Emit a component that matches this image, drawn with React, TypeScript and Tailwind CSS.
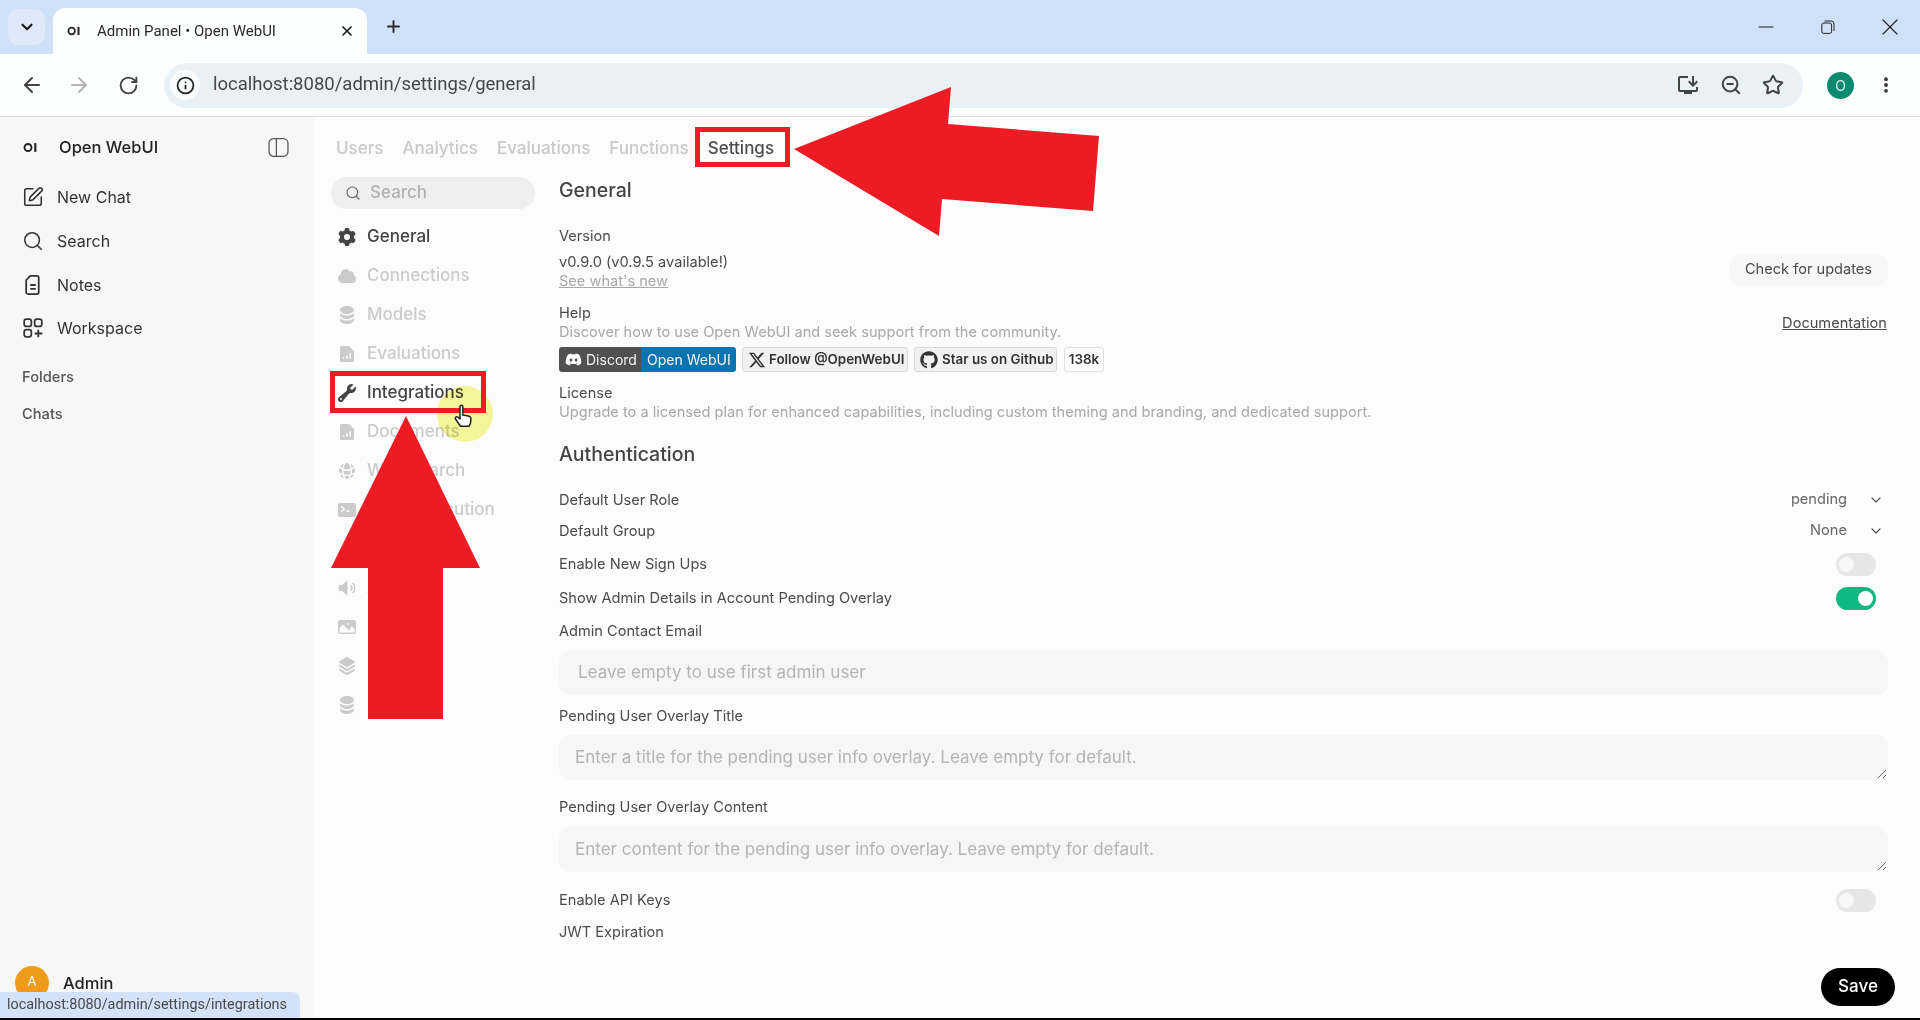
import { ArrowLeft, ArrowRight, ChevronDown, Info, Minus, Plus, RotateCw, Search, Star, SquarePen, X, MoreVertical, ZoomOut } from "lucide-react";
import { FaDiscord, FaGithub } from "react-icons/fa";
import { FaXTwitter } from "react-icons/fa6";
import { MdOutlineInstallDesktop } from "react-icons/md";
import {
  HiMiniCog6Tooth,
  HiMiniCloud,
  HiMiniCircleStack,
  HiMiniDocumentChartBar,
  HiMiniWrench,
  HiMiniGlobeAlt,
  HiMiniCommandLine,
  HiMiniChartBar,
  HiMiniSpeakerWave,
  HiMiniPhoto,
  HiMiniSquare3Stack3D,
} from "react-icons/hi2";

const navItems = [
  { label: "General", icon: HiMiniCog6Tooth, active: true },
  { label: "Connections", icon: HiMiniCloud },
  { label: "Models", icon: HiMiniCircleStack },
  { label: "Evaluations", icon: HiMiniDocumentChartBar },
  { label: "Integrations", icon: HiMiniWrench, active: true },
  { label: "Documents", icon: HiMiniDocumentChartBar },
  { label: "Web Search", icon: HiMiniGlobeAlt },
  { label: "Code Execution", icon: HiMiniCommandLine },
  { label: "Interface", icon: HiMiniChartBar },
  { label: "Audio", icon: HiMiniSpeakerWave },
  { label: "Images", icon: HiMiniPhoto },
  { label: "Pipelines", icon: HiMiniSquare3Stack3D },
  { label: "Database", icon: HiMiniCircleStack },
];

function OiLogo({ className }: { className: string }) {
  return (
    <svg viewBox="0 0 24 16" className={className} fill="none">
      <circle cx="8" cy="8" r="5.6" stroke="#222" strokeWidth="3" />
      <rect x="18" y="1" width="3.4" height="14" fill="#222" />
    </svg>
  );
}

function WorkspaceIcon() {
  return (
    <svg viewBox="0 0 20 20" className="w-[22px] h-[22px]" fill="none" stroke="#333" strokeWidth="1.6">
      <rect x="2" y="2" width="6.5" height="6.5" rx="2" />
      <rect x="11.5" y="2" width="6.5" height="6.5" rx="2" />
      <rect x="2" y="11.5" width="6.5" height="6.5" rx="2" />
      <path d="M14.8 11.500v7M11.500 15h7" />
    </svg>
  );
}

function NotesIcon() {
  return (
    <svg viewBox="0 0 20 20" className="w-[22px] h-[22px]" fill="none" stroke="#333" strokeWidth="1.6" strokeLinejoin="round">
      <path d="M7.500 1.800h6a1.700 1.700 0 0 1 1.700 1.700v13a1.700 1.700 0 0 1-1.700 1.700h-8a1.700 1.700 0 0 1-1.700-1.700V5.500z" />
      <path d="M7.500 10h5M7.500 13.500h5" />
    </svg>
  );
}

function RestoreIcon() {
  return (
    <svg viewBox="0 0 14 14" className="w-[14px] h-[14px]" fill="none" stroke="#222" strokeWidth="1">
      <rect x="0.800" y="3" width="9.800" height="10.400" rx="2" />
      <path d="M3.500 1h6.500a3 3 0 0 1 3 3v7" />
    </svg>
  );
}

function Toggle({ on }: { on?: boolean }) {
  return (
    <div className={`w-[40px] h-[23px] rounded-full flex items-center px-[3px] ${on ? "bg-[#10b981] justify-end" : "bg-[#e6e6e6] justify-start"}`}>
      <div className={`w-[15px] h-[15px] rounded-full ${on ? "bg-white" : "bg-[#f8f8f8]"}`} />
    </div>
  );
}

function Row({ label, mt, children }: { label: string; mt: string; children?: React.ReactNode }) {
  return (
    <div className={`flex items-center justify-between h-[20px] ${mt}`}>
      <span className="text-[14.6px] leading-[20px] text-[#4b4b4b]">{label}</span>
      {children}
    </div>
  );
}

function Resizer() {
  return (
    <svg viewBox="0 0 10 10" className="absolute right-[1px] bottom-[1px] w-[10px] h-[10px]" stroke="#666" strokeWidth="1">
      <path d="M1 9l8-8M6 9l3-3" />
    </svg>
  );
}

export default function App() {
  return (
    <div className="relative h-[1020px] w-[1920px] overflow-hidden flex flex-col bg-[#fcfcfc] font-['Inter',sans-serif]">
      {/* browser tab strip */}
      <div className="h-[54px] shrink-0 bg-[#d0e0f8] flex items-end">
        <div className="ml-[8px] mb-[9px] w-[37px] h-[36px] rounded-[10px] bg-[#dfe9f9] flex items-center justify-center">
          <ChevronDown className="w-[18px] h-[18px] text-[#1f1f1f]" strokeWidth={3} />
        </div>
        <div className="relative ml-[8px] w-[314px] h-[46px] bg-[#fdfefe] rounded-t-[12px] flex items-center pl-[14px] pr-[12px]">
          <OiLogo className="w-[14px] h-[10px]" />
          <span className="ml-[16px] text-[15px] text-[#2a2a2a] font-['Roboto',sans-serif] whitespace-nowrap">Admin Panel • Open WebUI</span>
          <X className="ml-auto w-[16px] h-[16px] text-[#1f1f1f]" strokeWidth={2.6} />
        </div>
        <Plus className="ml-[17px] mb-[18px] w-[19px] h-[19px] text-[#2a2a2a]" strokeWidth={2.4} />
        <div className="ml-auto flex items-center mb-[13px] pr-[16px] gap-[34px]">
          <div className="w-[28px] h-[28px] flex items-center justify-center"><Minus className="w-[24px] h-[24px] text-[#222]" strokeWidth={1.1} /></div>
          <div className="w-[28px] h-[28px] flex items-center justify-center"><RestoreIcon /></div>
          <div className="w-[28px] h-[28px] flex items-center justify-center"><X className="w-[28px] h-[28px] text-[#222]" strokeWidth={1} /></div>
        </div>
      </div>

      {/* browser toolbar */}
      <div className="h-[63px] shrink-0 bg-[#fdfefe] border-b border-[#dfdfdf] flex items-center pl-[20px] pr-[20px]">
        <ArrowLeft className="w-[24px] h-[24px] text-[#444]" strokeWidth={2} />
        <ArrowRight className="ml-[23px] w-[24px] h-[24px] text-[#b4b4b4]" strokeWidth={2} />
        <RotateCw className="ml-[27px] w-[21px] h-[21px] text-[#444]" strokeWidth={2.2} />
        <div className="ml-[25px] w-[1639px] h-[45px] rounded-full bg-[#eaf1f5] flex items-center pl-[6px] pr-[19px]">
          <div className="w-[30px] h-[30px] rounded-full bg-[#fbfdfd] flex items-center justify-center">
            <Info className="w-[19px] h-[19px] text-[#222]" strokeWidth={2.2} />
          </div>
          <span className="ml-[13px] text-[18.5px] text-[#474747] font-['Roboto',sans-serif]">localhost:8080/admin/settings/general</span>
          <div className="ml-auto flex items-center gap-[20px]">
            <MdOutlineInstallDesktop className="w-[24px] h-[24px] text-[#444]" />
            <ZoomOut className="w-[22px] h-[22px] text-[#444]" strokeWidth={2.2} />
            <Star className="w-[22px] h-[22px] text-[#444]" strokeWidth={2.2} />
          </div>
        </div>
        <div className="ml-[24px] w-[27px] h-[27px] rounded-full bg-[#0b8a6f] text-[#cfeee6] text-[14px] flex items-center justify-center">O</div>
        <MoreVertical className="ml-[22px] w-[20px] h-[20px] text-[#333]" strokeWidth={2.6} />
      </div>

      <div className="flex-1 min-h-0 flex">
        {/* app sidebar */}
        <aside className="w-[314px] shrink-0 bg-[#f7f7f7] flex flex-col pl-[22px]">
          <div className="mt-[15px] h-[30px] flex items-center pr-[25px]">
            <OiLogo className="ml-[1px] w-[15px] h-[11px]" />
            <span className="ml-[21px] text-[16.5px] font-medium text-[#222]">Open WebUI</span>
            <svg viewBox="0 0 20 20" className="ml-auto w-[21px] h-[21px]" fill="none" stroke="#555" strokeWidth="1.2">
              <rect x="1" y="1.500" width="18" height="17" rx="4.500" />
              <path d="M8 1.500v17" />
            </svg>
          </div>
          <div className="mt-[13px] flex flex-col text-[16px] text-[#333]">
            <div className="h-[44px] flex items-center gap-[13px]"><SquarePen className="w-[22px] h-[22px]" strokeWidth={1.7} />New Chat</div>
            <div className="h-[44px] flex items-center gap-[13px]"><Search className="w-[22px] h-[22px]" strokeWidth={1.7} />Search</div>
            <div className="h-[43px] flex items-center gap-[13px]"><NotesIcon />Notes</div>
            <div className="h-[44px] flex items-center gap-[13px]"><WorkspaceIcon />Workspace</div>
          </div>
          <div className="mt-[17px] text-[14.7px] leading-[20px] font-medium text-[#555]">Folders</div>
          <div className="mt-[17px] text-[14.7px] leading-[20px] font-medium text-[#555]">Chats</div>
          <div className="mt-auto mb-[18px] -ml-[7px] h-[34px] flex items-center gap-[14px]">
            <div className="w-[34px] h-[34px] rounded-full bg-[#ee9b1c] text-white text-[13px] flex items-center justify-center pb-[2px]">A</div>
            <span className="text-[16.5px] font-medium text-[#222]">Admin</span>
          </div>
        </aside>

        {/* main panel */}
        <main className="flex-1 min-w-0 flex flex-col pl-[17px] pr-[32px]">
          <div className="h-[60px] shrink-0 pt-[20px] pl-[5px] flex items-start gap-[19px] text-[17px] leading-[22px] font-medium text-[#c9c9c9]">
            <span>Users</span>
            <span>Analytics</span>
            <span>Evaluations</span>
            <span>Functions</span>
            <span className="text-[#4e4e4e]">Settings</span>
          </div>
          <div className="flex-1 min-h-0 flex gap-[24px]">
            <nav className="w-[204px] shrink-0">
              <div className="h-[32px] rounded-full bg-[#efefef] flex items-center pl-[14px] gap-[9px] text-[17px] font-medium text-[#b2b2b2]">
                <Search className="w-[16px] h-[16px] text-[#666]" strokeWidth={1.8} />
                Search
              </div>
              <div className="mt-[8px]">
                {navItems.map((item) => (
                  <div key={item.label} className={`h-[39px] pl-[6px] flex items-center gap-[10px] text-[17px] font-medium whitespace-nowrap ${item.active ? "text-[#444]" : "text-[#cbcbcb]"}`}>
                    <item.icon className="w-[20px] h-[20px] shrink-0" />
                    {item.label}
                  </div>
                ))}
              </div>
            </nav>

            <div className="flex-1 min-w-0 flex flex-col">
              <div className="h-[763px] overflow-hidden">
                <h2 className="h-[26px] text-[19.5px] leading-[26px] font-medium text-[#444]">General</h2>

                <div className="mt-[23px] text-[14.6px] leading-[20px] text-[#4b4b4b]">Version</div>
                <div className="flex items-start justify-between">
                  <div>
                    <div className="mt-[6px] text-[14.6px] leading-[20px] text-[#4b4b4b]">v0.9.0 (v0.9.5 available!)</div>
                    <div className="-mt-[1px] text-[14.6px] leading-[20px] text-[#a8a8a8] underline">See what's new</div>
                  </div>
                  <button className="mt-[8px] w-[159px] h-[32px] rounded-[12px] bg-[#f7f7f7] text-[14.6px] text-[#4b4b4b]">Check for updates</button>
                </div>

                <div className="mt-[12px] flex justify-between items-center text-[14.6px] leading-[20px]">
                  <div>
                    <div className="text-[#4b4b4b]">Help</div>
                    <div className="-mt-[1px] text-[#a8a8a8]">Discover how to use Open WebUI and seek support from the community.</div>
                  </div>
                  <span className="mr-[1px] text-[#4b4b4b] underline">Documentation</span>
                </div>

                <div className="mt-[5px] h-[25px] flex items-stretch text-[14px] whitespace-nowrap">
                  <div className="w-[82px] rounded-l-[3px] bg-[#505050] text-[#f3f3f3] flex items-center pl-[6px] gap-[4px]">
                    <FaDiscord className="w-[17px] h-[17px] text-white" />Discord
                  </div>
                  <div className="w-[95px] rounded-r-[3px] bg-[#0a74b0] text-[#f3f3f3] flex items-center pl-[6px]">Open WebUI</div>
                  <div className="ml-[6px] w-[166px] rounded-[3px] border border-[#d8d8d8] bg-[#f1f1f1] text-[#333] font-semibold flex items-center pl-[5px] gap-[3px] text-[13.4px]">
                    <FaXTwitter className="w-[18px] h-[18px] shrink-0" />Follow @OpenWebUI
                  </div>
                  <div className="ml-[6px] w-[143px] rounded-[3px] border border-[#d8d8d8] bg-[#f1f1f1] text-[#333] font-semibold flex items-center pl-[5px] gap-[4px] text-[13.4px]">
                    <FaGithub className="w-[18px] h-[18px] shrink-0" />Star us on Github
                  </div>
                  <div className="ml-[7px] w-[40px] rounded-[3px] border border-[#e0e0e0] bg-[#fbfbfb] text-[#333] font-semibold flex items-center justify-center text-[13.4px]">138k</div>
                </div>

                <div className="mt-[11px] text-[14.6px] leading-[20px] text-[#4b4b4b]">License</div>
                <div className="-mt-[1px] text-[14.6px] leading-[20px] text-[#a8a8a8]">Upgrade to a licensed plan for enhanced capabilities, including custom theming and branding, and dedicated support.</div>

                <h2 className="mt-[19px] h-[26px] text-[19.5px] leading-[26px] font-medium text-[#444]">Authentication</h2>

                <Row label="Default User Role" mt="mt-[23px]">
                  <div className="flex items-center gap-[21px] pr-[4px] text-[14.6px] text-[#666]">
                    pending
                    <ChevronDown className="w-[16px] h-[16px] text-[#555]" strokeWidth={1.8} />
                  </div>
                </Row>
                <Row label="Default Group" mt="mt-[11px]">
                  <div className="flex items-center gap-[21px] pr-[4px] text-[14.6px] text-[#666]">
                    None
                    <ChevronDown className="w-[16px] h-[16px] text-[#555]" strokeWidth={1.8} />
                  </div>
                </Row>
                <Row label="Enable New Sign Ups" mt="mt-[13px]">
                  <div className="mr-[12px]"><Toggle /></div>
                </Row>
                <Row label="Show Admin Details in Account Pending Overlay" mt="mt-[14px]">
                  <div className="mr-[12px]"><Toggle on /></div>
                </Row>
                <Row label="Admin Contact Email" mt="mt-[13px]" />
                <div className="mt-[10px] h-[44px] rounded-[12px] bg-[#f6f6f6] flex items-center pl-[19px] text-[17px] text-[#b4b4b4]">Leave empty to use first admin user</div>

                <Row label="Pending User Overlay Title" mt="mt-[11px]" />
                <div className="relative mt-[9px] h-[45px] rounded-[12px] bg-[#f6f6f6] flex items-center pl-[16px] text-[17px] text-[#b4b4b4]">
                  Enter a title for the pending user info overlay. Leave empty for default.
                  <Resizer />
                </div>

                <Row label="Pending User Overlay Content" mt="mt-[17px]" />
                <div className="relative mt-[10px] h-[45px] rounded-[12px] bg-[#f6f6f6] flex items-center pl-[16px] text-[17px] text-[#b4b4b4]">
                  Enter content for the pending user info overlay. Leave empty for default.
                  <Resizer />
                </div>

                <Row label="Enable API Keys" mt="mt-[18px]">
                  <div className="mr-[12px]"><Toggle /></div>
                </Row>
                <Row label="JWT Expiration" mt="mt-[12px]" />
              </div>
              <div className="mt-[28px] -mr-[7px] flex justify-end">
                <button className="w-[74px] h-[38px] rounded-full bg-black text-white text-[17px] font-medium">Save</button>
              </div>
            </div>
          </div>
        </main>
      </div>
      <div className="h-[2px] shrink-0 bg-black" />

      {/* link preview bubble */}
      <div className="absolute left-0 top-[992px] w-[300px] h-[26px] rounded-tr-[8px] bg-[#d3e2f8] pl-[7px] text-[14.4px] leading-[26px] text-[#4a4a4a] font-['Roboto',sans-serif]">
        localhost:8080/admin/settings/integrations
      </div>

      {/* tutorial annotations */}
      <div className="absolute left-[437px] top-[386px] w-[56px] h-[56px] rounded-full bg-[#f7f79a] mix-blend-multiply" />
      <div className="absolute left-[695px] top-[127px] w-[95px] h-[40px] border-[5px] border-[#ed1c24]" />
      <div className="absolute left-[330px] top-[371px] w-[156px] h-[42px] border-[5px] border-[#ed1c24]" />
      <svg className="absolute left-[790px] top-[85px] w-[312px] h-[154px]" viewBox="790 85 312 154">
        <polygon points="794,149 951,87 948,124 1099,136 1093,211 942,199 939,236" fill="#ed1c24" />
      </svg>
      <svg className="absolute left-[330px] top-[416px] w-[151px] h-[304px]" viewBox="330 416 151 304">
        <polygon points="406,416 480,568 443,568 443,719 368,719 368,568 331,568" fill="#ed1c24" />
      </svg>
      <svg viewBox="0 0 24 24" className="absolute left-[451px] top-[402px] w-[24px] h-[28px]" fill="#fff" stroke="#222" strokeWidth="1.500" strokeLinejoin="round">
        <path d="M9 2.500c0-1.600 2.800-1.600 2.800 0V11l5.400 1c2 .4 2.800 1.500 2.800 3.200 0 3-.6 4.600-1.800 7H9.500L4.500 15c-1-1.600 1-3 2.300-1.800L9 15z" />
      </svg>
    </div>
  );
}
